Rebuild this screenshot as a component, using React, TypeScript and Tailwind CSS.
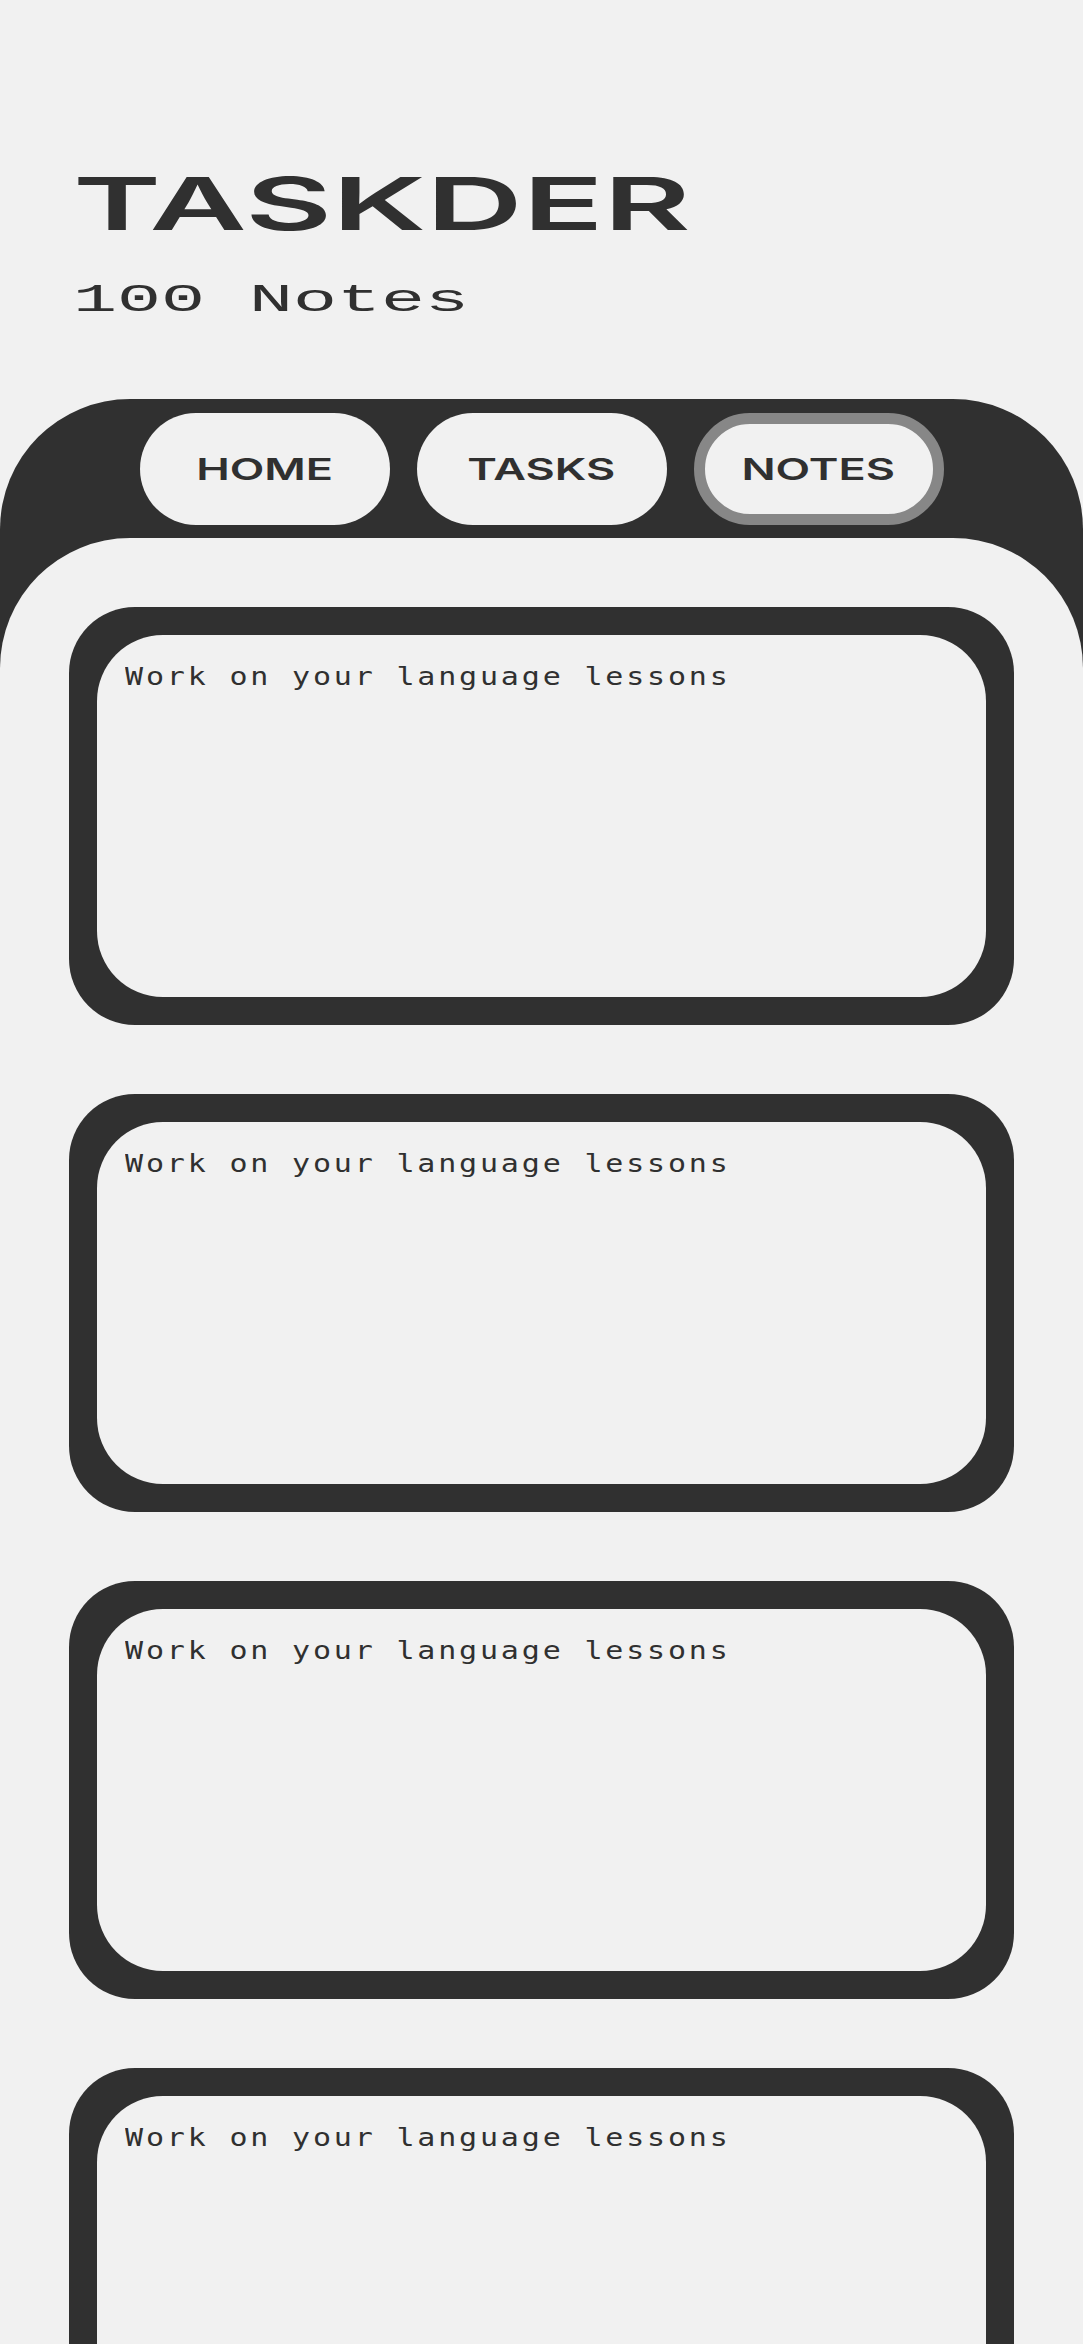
import React from "react";

const notes = [
  "Work on your language lessons",
  "Work on your language lessons",
  "Work on your language lessons",
  "Work on your language lessons",
];

function NavPill({ label, active }: { label: string; active?: boolean }) {
  return (
    <div
      className={
        active
          ? "flex h-[112px] w-[250px] items-center justify-center rounded-full border-[11px] border-[#878787] bg-[#f1f1f1]"
          : "flex h-[112px] w-[250px] items-center justify-center rounded-full bg-[#f1f1f1]"
      }
    >
      <span className="inline-block origin-center scale-x-[1.5] font-['Inter','Liberation_Sans',sans-serif] text-[30px] font-semibold leading-none text-[#303030]">
        {label}
      </span>
    </div>
  );
}

function NoteCard({ text }: { text: string }) {
  return (
    <div className="h-[418px] shrink-0 rounded-[66px] bg-[#303030] p-[28px]">
      <div className="h-full rounded-[66px] bg-[#f1f1f1] px-[28px] pt-[27px]">
        <p className="inline-block origin-left scale-x-[1.2] whitespace-nowrap font-['DejaVu_Sans_Mono',monospace] text-[25px] leading-[30px] tracking-[2.35px] text-[#303030]">
          {text}
        </p>
      </div>
    </div>
  );
}

export default function App() {
  return (
    <div className="min-h-[2344px] overflow-hidden bg-[#f1f1f1]">
      <header className="pl-[73px] pt-[167px]">
        <h1 className="inline-block origin-left scale-x-[1.83] font-['Inter','Liberation_Sans',sans-serif] text-[73px] font-semibold leading-none text-[#303030]">
          TASKDER
        </h1>
        <div className="mt-[42px]">
          <span className="inline-block origin-left scale-x-[1.88] font-['Liberation_Mono',monospace] text-[39px] leading-none text-[#303030]">
            100 Notes
          </span>
        </div>
      </header>

      <section className="mt-[78px] rounded-t-[130px] bg-[#303030] pt-[14px]">
        <nav className="flex justify-center gap-[27px]">
          <NavPill label="HOME" />
          <NavPill label="TASKS" />
          <NavPill label="NOTES" active />
        </nav>
        <div className="mt-[13px] flex flex-col gap-[69px] rounded-t-[130px] bg-[#f1f1f1] px-[69px] pt-[69px] pb-[80px]">
          {notes.map((n, i) => (
            <NoteCard key={i} text={n} />
          ))}
        </div>
      </section>
    </div>
  );
}
